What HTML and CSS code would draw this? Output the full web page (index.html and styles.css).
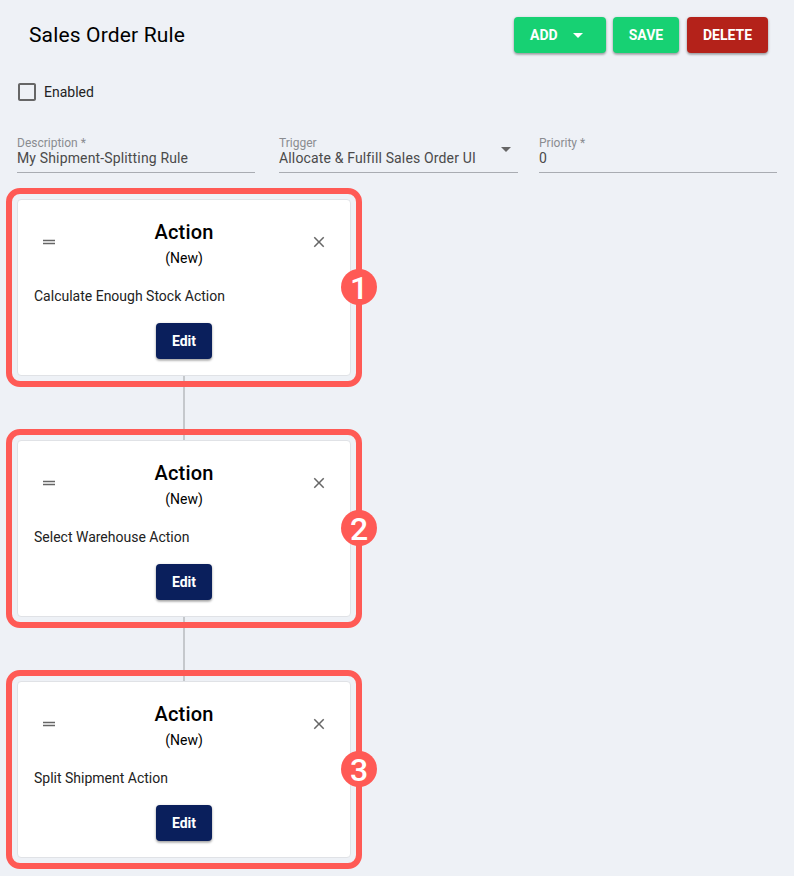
FILE: index.html
```html
<!DOCTYPE html>
<html lang="en">
<head>
    <meta charset="UTF-8">
    <meta name="viewport" content="width=device-width, initial-scale=1.0">
    <title>Sales Order Rule</title>
    <link rel="stylesheet" href="styles.css">
</head>
<body>
    <div class="page-header">
        <h1>Sales Order Rule</h1>
        <div class="header-actions">
            <button class="btn btn-green btn-add">ADD
                <svg class="caret" viewBox="0 0 24 24"><path d="M7 10l5 5 5-5z"/></svg>
            </button>
            <button class="btn btn-green btn-save">SAVE</button>
            <button class="btn btn-red">DELETE</button>
        </div>
    </div>

    <label class="enabled-row">
        <svg class="checkbox" viewBox="0 0 24 24"><path d="M19 5v14H5V5h14m0-2H5c-1.1 0-2 .9-2 2v14c0 1.1.9 2 2 2h14c1.1 0 2-.9 2-2V5c0-1.1-.9-2-2-2z"/></svg>
        <span>Enabled</span>
    </label>

    <div class="fields">
        <div class="field field-desc">
            <span class="field-label">Description *</span>
            <span class="field-value">My Shipment-Splitting Rule</span>
        </div>
        <div class="field field-trigger">
            <span class="field-label">Trigger</span>
            <span class="field-value">Allocate &amp; Fulfill Sales Order UI</span>
            <svg class="select-caret" viewBox="0 0 24 24"><path d="M7 10l5 5 5-5z"/></svg>
        </div>
        <div class="field field-priority">
            <span class="field-label">Priority *</span>
            <span class="field-value">0</span>
        </div>
    </div>

    <div class="chain">
        <div class="highlight">
            <div class="action-card">
                <div class="card-head">
                    <svg class="icon" viewBox="0 0 24 24"><path d="M20 9H4v2h16V9zm0 4H4v2h16v-2z"/></svg>
                    <div class="card-title">
                        <h2>Action</h2>
                        <p>(New)</p>
                    </div>
                    <svg class="icon" viewBox="0 0 24 24"><path d="M19 6.41L17.59 5 12 10.59 6.41 5 5 6.41 10.59 12 5 17.59 6.41 19 12 13.41 17.59 19 19 17.59 13.41 12z"/></svg>
                </div>
                <p class="card-text">Calculate Enough Stock Action</p>
                <button class="btn btn-edit">Edit</button>
            </div>
            <span class="badge">1</span>
        </div>
        <div class="connector"></div>
        <div class="highlight">
            <div class="action-card">
                <div class="card-head">
                    <svg class="icon" viewBox="0 0 24 24"><path d="M20 9H4v2h16V9zm0 4H4v2h16v-2z"/></svg>
                    <div class="card-title">
                        <h2>Action</h2>
                        <p>(New)</p>
                    </div>
                    <svg class="icon" viewBox="0 0 24 24"><path d="M19 6.41L17.59 5 12 10.59 6.41 5 5 6.41 10.59 12 5 17.59 6.41 19 12 13.41 17.59 19 19 17.59 13.41 12z"/></svg>
                </div>
                <p class="card-text">Select Warehouse Action</p>
                <button class="btn btn-edit">Edit</button>
            </div>
            <span class="badge">2</span>
        </div>
        <div class="connector"></div>
        <div class="highlight">
            <div class="action-card">
                <div class="card-head">
                    <svg class="icon" viewBox="0 0 24 24"><path d="M20 9H4v2h16V9zm0 4H4v2h16v-2z"/></svg>
                    <div class="card-title">
                        <h2>Action</h2>
                        <p>(New)</p>
                    </div>
                    <svg class="icon" viewBox="0 0 24 24"><path d="M19 6.41L17.59 5 12 10.59 6.41 5 5 6.41 10.59 12 5 17.59 6.41 19 12 13.41 17.59 19 19 17.59 13.41 12z"/></svg>
                </div>
                <p class="card-text">Split Shipment Action</p>
                <button class="btn btn-edit">Edit</button>
            </div>
            <span class="badge">3</span>
        </div>
    </div>
</body>
</html>
```

FILE: styles.css
```css
* {
    margin: 0;
    padding: 0;
    box-sizing: border-box;
}

html, body {
    height: 876px;
    overflow: hidden;
}

body {
    font-family: Roboto, sans-serif;
    background: #eef1f6;
    color: #000;
    font-size: 14px;
    padding-top: 17px;
}

.page-header {
    display: flex;
    justify-content: space-between;
    align-items: center;
    height: 36px;
    padding: 0 26px 0 29px;
}

.page-header h1 {
    font-size: 21px;
    font-weight: 400;
    letter-spacing: 0.15px;
}

.header-actions {
    display: flex;
    gap: 7px;
}

.btn {
    height: 36px;
    border: none;
    border-radius: 4px;
    color: #fff;
    font-family: Roboto, sans-serif;
    font-size: 14px;
    font-weight: 700;
    cursor: pointer;
    box-shadow: 0 1px 3px rgba(0,0,0,0.3), 0 2px 2px rgba(0,0,0,0.14);
}

.btn-green {
    background: #17d173;
}

.btn-red {
    background: #b4221a;
    width: 81px;
    margin-left: 1px;
}

.btn-add {
    width: 92px;
    display: flex;
    align-items: center;
    padding-left: 16px;
}

.btn-save {
    width: 66px;
}

.caret {
    width: 24px;
    height: 24px;
    fill: #fff;
    margin-left: 8px;
}

.enabled-row {
    display: flex;
    align-items: center;
    gap: 5px;
    padding: 27px 0 0 15px;
    line-height: 24px;
    color: #222;
}

.checkbox {
    width: 24px;
    height: 24px;
    fill: #666;
}

.fields {
    display: flex;
    padding: 33px 0 0 17px;
}

.field {
    position: relative;
    height: 36px;
    border-bottom: 1px solid #a9acb2;
    display: flex;
    flex-direction: column;
}

.field-desc {
    width: 238px;
    margin-right: 24px;
}

.field-trigger {
    width: 239px;
    margin-right: 21px;
}

.field-priority {
    width: 238px;
}

.field-label {
    font-size: 12px;
    line-height: 13px;
    color: #8a8c90;
}

.field-value {
    font-size: 14px;
    line-height: 16px;
    color: #4a4a4a;
    letter-spacing: 0.15px;
}

.select-caret {
    position: absolute;
    right: 0;
    top: 0;
    width: 24px;
    height: 24px;
    fill: #666;
}

.chain {
    padding: 15px 0 0 6px;
}

.highlight {
    position: relative;
    width: 356px;
    height: 199px;
    border: 6px solid #ff5a55;
    border-radius: 14px;
    padding: 5px;
}

.action-card {
    height: 177px;
    background: #fff;
    border: 1px solid #e0e2e6;
    border-radius: 4px;
    padding: 20px 16px 0;
    text-align: center;
}

.card-head {
    display: flex;
    justify-content: space-between;
    align-items: center;
    padding: 0 6px;
}

.card-title h2 {
    font-size: 20px;
    font-weight: 500;
    line-height: 24px;
    letter-spacing: 0.15px;
}

.card-title p {
    font-size: 14px;
    line-height: 16px;
    margin-top: 6px;
}

.icon {
    width: 18px;
    height: 18px;
    fill: #666;
    margin-top: -2px;
}

.card-text {
    text-align: left;
    margin-top: 22px;
    line-height: 16px;
    color: #222;
}

.btn-edit {
    display: block;
    width: 56px;
    margin: 19px auto 0;
    background: #0a1f5c;
}

.connector {
    width: 2px;
    height: 64px;
    margin: -11px 0 -11px 177px;
    background: #c5c8cc;
}

.badge {
    position: absolute;
    right: -21px;
    top: 75px;
    width: 36px;
    height: 36px;
    border-radius: 50%;
    background: #ff5a55;
    color: #fff;
    font-size: 32px;
    font-weight: 500;
    line-height: 38px;
    text-align: center;
}
```
